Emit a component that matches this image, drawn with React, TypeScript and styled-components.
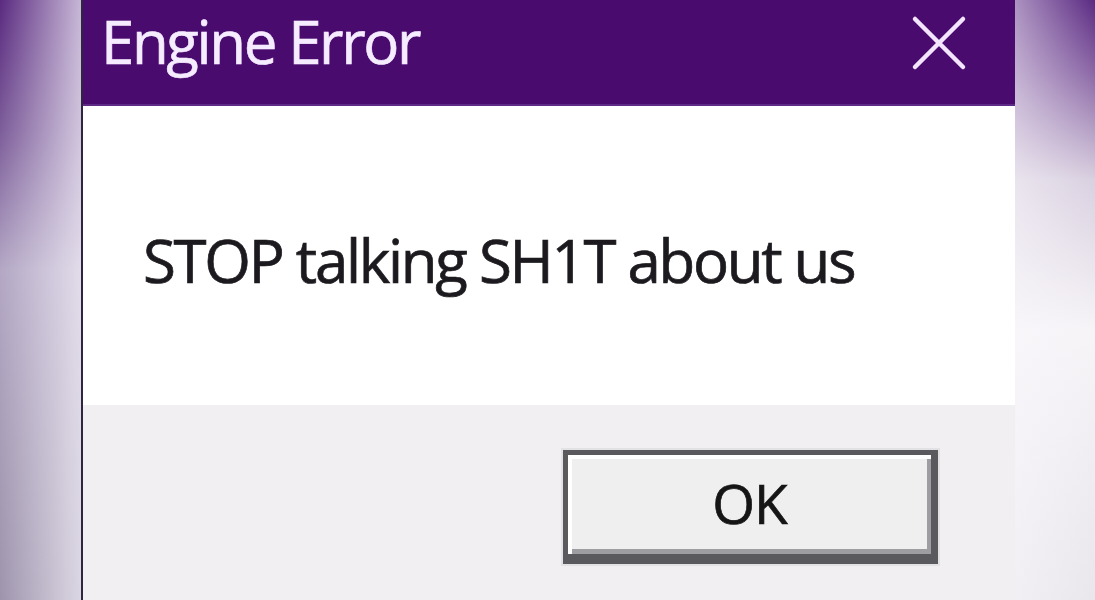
import React from "react"
import styled, { createGlobalStyle } from "styled-components"

const GlobalStyle = createGlobalStyle`
	html, body {
		margin: 0;
		padding: 0;
		background: #ffffff;
	}
	body {
		font-family: "Open Sans", "Noto Sans", "Liberation Sans", sans-serif;
	}
`

const Page = styled.div`
	display: flex;
	width: 1095px;
	height: 600px;
	overflow: hidden;
`

const Backdrop = styled.div<{ $side: "left" | "right" }>`
	flex: ${({ $side }) => ($side == "left" ? "0 0 81px" : "1 1 auto")};
	background: ${({ $side }) =>
		$side == "left"
			? "linear-gradient(90deg, rgba(255,255,255,0) 0%, rgba(245,242,250,0.7) 100%), linear-gradient(180deg, #5a2a80 0%, #7d5d9a 22%, #b3a7c4 45%, #a79db6 75%, #9e95ad 100%)"
			: "linear-gradient(90deg, rgba(250,248,252,0.5) 0%, rgba(255,255,255,0) 100%), linear-gradient(180deg, #5b2a82 0%, #8b67a6 12%, #d9d0e0 30%, #f6f4f7 55%, #e9e6ec 100%)"};
`

const Dialog = styled.div`
	flex: 0 0 934px;
	display: flex;
	flex-direction: column;
	border-left: 2px solid #2f2540;
	box-sizing: border-box;
`

const TitleBar = styled.div`
	flex: 0 0 106px;
	display: flex;
	align-items: flex-start;
	justify-content: space-between;
	padding: 0 46px 0 18px;
	box-sizing: border-box;
	background: #4a0b6f;
	border-bottom: 2px solid #5d2a86;
`

const Title = styled.div`
	font-size: 60px;
	line-height: 82px;
	color: #f6ecff;
	letter-spacing: -2.4px;
	-webkit-text-stroke: 0.6px #f6ecff;
`

const CloseButton = styled.button`
	display: flex;
	align-items: center;
	justify-content: center;
	width: 60px;
	height: 60px;
	margin-top: 13px;
	padding: 0;
	border: none;
	background: transparent;
`

const Body = styled.div`
	flex: 0 0 299px;
	display: flex;
	align-items: center;
	padding: 0 0 0 60px;
	box-sizing: border-box;
	background: #ffffff;
`

const Message = styled.div`
	font-size: 60px;
	line-height: 84px;
	color: #1c1a1e;
	margin-top: 8px;
	letter-spacing: -2.3px;
	-webkit-text-stroke: 0.7px #1c1a1e;
`

const Footer = styled.div`
	flex: 1 1 auto;
	display: flex;
	justify-content: flex-end;
	align-items: flex-start;
	padding: 45px 77px 0 0;
	background: #f1eff1;
`

const OkButton = styled.button`
	width: 375px;
	height: 114px;
	box-sizing: border-box;
	border: 5px solid #5a5a5e;
	border-bottom-width: 10px;
	border-right-width: 7px;
	background: #f0eff0;
	box-shadow: inset 4px 4px 0 #ffffff, inset -4px -5px 0 #9d9da2, 0 0 0 2px #e2e2e4;
	font-family: "Open Sans", "Noto Sans", sans-serif;
	font-size: 55px;
	line-height: 76px;
	letter-spacing: -1px;
	color: #151515;
	-webkit-text-stroke: 0.7px #151515;
	padding: 0 0 4px;
`

export default function App() {
	return (
		<>
			<GlobalStyle />
			<Page>
				<Backdrop $side="left" />
				<Dialog>
					<TitleBar>
						<Title>Engine Error</Title>
						<CloseButton aria-label="Close">
							<svg width="56" height="56" viewBox="0 0 56 56">
								<path d="M4 4 L52 52 M52 4 L4 52" stroke="#f3e4ff" strokeWidth="4.5" strokeLinecap="round" />
							</svg>
						</CloseButton>
					</TitleBar>
					<Body>
						<Message>STOP talking SH1T about us</Message>
					</Body>
					<Footer>
						<OkButton>OK</OkButton>
					</Footer>
				</Dialog>
				<Backdrop $side="right" />
			</Page>
		</>
	)
}
